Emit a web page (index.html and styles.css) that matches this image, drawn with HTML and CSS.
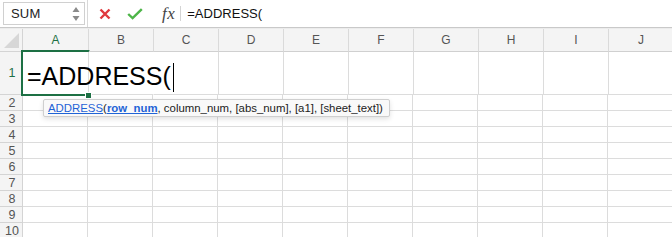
FILE: index.html
```html
<!DOCTYPE html>
<html>
<head>
<meta charset="utf-8">
<link rel="stylesheet" href="styles.css">
</head>
<body>
<div class="app">
  <div class="fbar">
    <div class="namebox">
      <span class="nb-text">SUM</span>
      <svg class="spin" width="8" height="16" viewBox="0 0 8 16"><path d="M4 1 L7.5 6 L0.5 6 Z" fill="#8a8a8a"/><path d="M0.5 10 L7.5 10 L4 15 Z" fill="#8a8a8a"/></svg>
    </div>
    <div class="nb-div"></div>
    <div class="btns">
      <svg class="ico-x" width="12" height="12" viewBox="0 0 12 12"><path d="M1.5 1.5 L10.5 10.5 M10.5 1.5 L1.5 10.5" stroke="#e0393e" stroke-width="2.4" stroke-linecap="butt"/></svg>
      <svg class="ico-ok" width="16" height="12" viewBox="0 0 16 12"><path d="M1.2 6 L5.6 10.2 L14.8 1.2" stroke="#4db548" stroke-width="2.4" fill="none"/></svg>
      <span class="fx">fx</span>
    </div>
    <div class="fsep"></div>
    <div class="ftext">=ADDRESS(</div>
  </div>
  <div class="gapline"></div>
  <div class="sheet">
    <div class="row hdr">
      <div class="rh corner"><span class="tri"></span></div>
      <div class="ch sel">A</div><div class="ch">B</div><div class="ch">C</div><div class="ch">D</div><div class="ch">E</div><div class="ch">F</div><div class="ch">G</div><div class="ch">H</div><div class="ch">I</div><div class="ch">J</div>
    </div>
    <div class="row r1">
      <div class="rh sel">1</div>
      <div class="c a1"></div><div class="c nob"></div><div class="c"></div><div class="c"></div><div class="c"></div><div class="c"></div><div class="c"></div><div class="c"></div><div class="c"></div><div class="c"></div>
    </div>
    <div class="row"><div class="rh">2</div><div class="c"></div><div class="c"></div><div class="c"></div><div class="c"></div><div class="c"></div><div class="c"></div><div class="c"></div><div class="c"></div><div class="c"></div><div class="c"></div></div>
    <div class="row"><div class="rh">3</div><div class="c"></div><div class="c"></div><div class="c"></div><div class="c"></div><div class="c"></div><div class="c"></div><div class="c"></div><div class="c"></div><div class="c"></div><div class="c"></div></div>
    <div class="row"><div class="rh">4</div><div class="c"></div><div class="c"></div><div class="c"></div><div class="c"></div><div class="c"></div><div class="c"></div><div class="c"></div><div class="c"></div><div class="c"></div><div class="c"></div></div>
    <div class="row"><div class="rh">5</div><div class="c"></div><div class="c"></div><div class="c"></div><div class="c"></div><div class="c"></div><div class="c"></div><div class="c"></div><div class="c"></div><div class="c"></div><div class="c"></div></div>
    <div class="row"><div class="rh">6</div><div class="c"></div><div class="c"></div><div class="c"></div><div class="c"></div><div class="c"></div><div class="c"></div><div class="c"></div><div class="c"></div><div class="c"></div><div class="c"></div></div>
    <div class="row"><div class="rh">7</div><div class="c"></div><div class="c"></div><div class="c"></div><div class="c"></div><div class="c"></div><div class="c"></div><div class="c"></div><div class="c"></div><div class="c"></div><div class="c"></div></div>
    <div class="row"><div class="rh">8</div><div class="c"></div><div class="c"></div><div class="c"></div><div class="c"></div><div class="c"></div><div class="c"></div><div class="c"></div><div class="c"></div><div class="c"></div><div class="c"></div></div>
    <div class="row"><div class="rh">9</div><div class="c"></div><div class="c"></div><div class="c"></div><div class="c"></div><div class="c"></div><div class="c"></div><div class="c"></div><div class="c"></div><div class="c"></div><div class="c"></div></div>
    <div class="row"><div class="rh">10</div><div class="c"></div><div class="c"></div><div class="c"></div><div class="c"></div><div class="c"></div><div class="c"></div><div class="c"></div><div class="c"></div><div class="c"></div><div class="c"></div></div>
  </div>
  <div class="selbox"><span class="handle"></span></div>
  <div class="editor"><span class="big">=ADDRESS(</span><span class="caret"></span></div>
  <div class="tip"><a class="fn">ADDRESS</a>(<a class="arg">row_num</a>, column_num, [abs_num], [a1], [sheet_text])</div>
</div>
</body>
</html>
```

FILE: styles.css
```css
* { box-sizing: border-box; }
html, body { margin: 0; padding: 0; background: #fff; }
body { width: 672px; height: 237px; overflow: hidden; font-family: "Liberation Sans", Arial, sans-serif; }
.app { position: relative; width: 672px; height: 237px; overflow: hidden; }

.fbar { height: 28px; display: flex; align-items: center; border-bottom: 1px solid #c9c9c9; background: #fff; }
.namebox { margin-left: 3px; width: 82px; height: 23px; border: 1px solid #d0d0d0; display: flex; align-items: center; justify-content: space-between; padding: 0 4px 0 7px; }
.nb-text { font-size: 13px; color: #222; letter-spacing: 0.2px; }
.spin { display: block; }
.nb-div { width: 1px; height: 27px; background: #d8d8d8; margin-left: 2px; align-self: flex-start; }
.btns { display: flex; align-items: center; margin-left: 11px; }
.ico-x { display: block; }
.ico-ok { display: block; margin-left: 16px; }
.fx { font-family: "Liberation Serif", "Times New Roman", serif; font-style: italic; font-size: 17px; color: #444; margin-left: 19px; letter-spacing: 0.5px; }
.fsep { width: 1px; height: 15px; background: #d4d4d4; margin-left: 5px; }
.ftext { margin-left: 6px; font-size: 13px; color: #111; }

.gapline { height: 1px; background: #ececec; }

.sheet { display: flex; flex-direction: column; }
.row { display: flex; height: 16px; }
.row.hdr { height: 23px; background: #f4f4f4; }
.row.r1 { height: 43px; }
.rh { width: 23px; flex: none; border-right: 1px solid #d4d4d4; border-bottom: 1px solid #d4d4d4; background: #f4f4f4; font-size: 12.5px; color: #555; display: flex; align-items: center; justify-content: center; padding-left: 2px; }
.rh.sel { color: #1d7044; }
.corner { justify-content: flex-end; align-items: flex-end; padding: 0 3px 3px 0; }
.tri { width: 0; height: 0; border-left: 15px solid transparent; border-bottom: 15px solid #d7d7d7; }
.ch { width: 65px; flex: none; border-right: 1px solid #dadada; border-bottom: 1px solid #d0d0d0; font-size: 12px; color: #555; display: flex; align-items: center; justify-content: center; }
.ch.sel { width: 66px; color: #1d7044; border-bottom: 2px solid #1d7044; padding-top: 1px; }
.c { width: 65px; flex: none; border-right: 1px solid #dcdcdc; border-bottom: 1px solid #dcdcdc; }
.c.a1 { width: 66px; }
.c.nob { border-right-color: transparent; }

.selbox { position: absolute; left: 21px; top: 50px; width: 69px; height: 46px; border: 2px solid #1d7044; border-right-color: transparent; z-index: 3; }
.handle { position: absolute; right: -4px; bottom: -5px; width: 7px; height: 7px; background: #1d7044; border: 1px solid #fff; }

.editor { position: absolute; left: 27px; top: 58px; height: 36px; width: 150px; z-index: 4; }
.big { position: absolute; left: 0; top: 3px; font-size: 25px; line-height: 30px; color: #000; white-space: nowrap; }
.caret { position: absolute; left: 146px; top: 5px; width: 1px; height: 29px; background: #000; }

.tip { position: absolute; left: 43px; top: 99px; height: 18px; width: 347px; background: #f9f9f9; border: 1px solid #cfcfcf; border-radius: 2px; box-shadow: 0 2px 5px rgba(0,0,0,0.12); font-size: 11.4px; line-height: 16px; color: #222; padding: 0 0 0 4px; white-space: nowrap; z-index: 5; }
.tip .fn { color: #1f63d6; text-decoration: underline; }
.tip .arg { color: #1f63d6; text-decoration: underline; font-weight: bold; }
```
